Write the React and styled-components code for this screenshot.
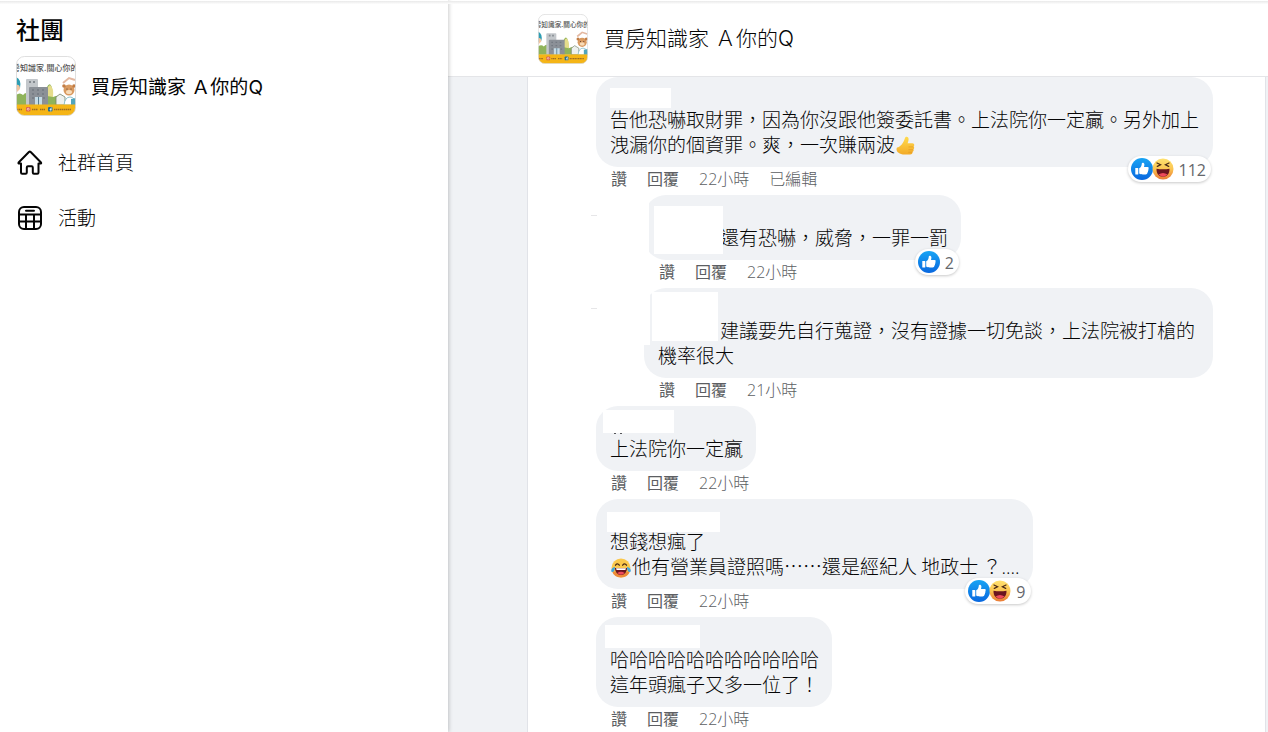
import React from "react";
import styled, { createGlobalStyle } from "styled-components";

const GlobalStyle = createGlobalStyle`
  * {
    box-sizing: border-box;
  }

  body {
    margin: 0;
    background: #ffffff;
    color: #050505;
    font-family: "Noto Sans CJK TC", "Open Sans", sans-serif;
    font-weight: 300;
  }

  h1, h2, p, ul {
    margin: 0;
    padding: 0;
  }

  a {
    color: inherit;
    text-decoration: none;
  }
`;

const Page = styled.div`
  display: flex;
  height: 100vh;
  overflow: hidden;
`;

const TopShade = styled.div`
  position: fixed;
  inset: 1px 0 auto 0;
  height: 3px;
  background: linear-gradient(#e9e9e9, #fdfdfd);
  z-index: 5;
`;

const Sidebar = styled.aside`
  flex: 0 0 448px;
  padding: 11px 16px;
  background: #ffffff;
  box-shadow: 1px 0 4px rgba(0, 0, 0, 0.2);
  z-index: 3;
`;

const SidebarTitle = styled.h1`
  font-size: 24px;
  line-height: 36px;
  font-weight: 500;
  margin-bottom: 9px;
`;

const GroupLink = styled.a`
  display: flex;
  align-items: center;
  gap: 15px;
  font-size: 19px;
  font-weight: 400;

  > span {
    padding-bottom: 2px;
  }
`;

const GroupPicture = styled.svg`
  display: block;
  flex: none;
  width: ${({ $size }) => $size}px;
  height: ${({ $size }) => $size}px;
`;

const Latin = styled.span`
  font-family: ${({ $wide }) => ($wide ? "Inter" : '"Open Sans"')}, sans-serif;
  line-height: 1;
`;

const Menu = styled.nav`
  display: flex;
  flex-direction: column;
  margin-top: 19px;
`;

const MenuItem = styled.a`
  display: flex;
  align-items: center;
  gap: 15px;
  height: 55px;
  font-size: 19px;

  svg {
    flex: none;
    width: 27px;
    height: 27px;
    fill: none;
    stroke: #050505;
    stroke-width: 2;
    stroke-linejoin: round;
    stroke-linecap: round;
  }

  span {
    padding-bottom: 2px;
  }
`;

const Main = styled.main`
  flex: 1;
  display: flex;
  flex-direction: column;
  min-width: 0;
  background: #f0f2f5;
`;

const Header = styled.header`
  display: flex;
  align-items: center;
  gap: 16px;
  flex: none;
  height: 77px;
  padding: 2px 0 0 90px;
  background: #ffffff;
  border-bottom: 1px solid #e4e5e8;
  z-index: 2;

  h2 {
    padding-bottom: 4px;
    font-size: 21px;
    font-weight: 300;
  }
`;

const Feed = styled.section`
  flex: 1;
  min-height: 0;
  margin: 0 2px 0 79px;
  padding: 0 52px 0 68px;
  border: solid #e1e3e8;
  border-width: 0 1px;
  background: #ffffff;
  overflow-y: auto;
  scrollbar-width: none;
`;

const Comment = styled.article`
  position: relative;
  padding-left: ${({ $reply }) => ($reply ? 48 : 0)}px;
  margin-bottom: 6px;
`;

const ThreadMark = styled.span`
  position: absolute;
  left: -5px;
  top: 20px;
  width: 6px;
  height: 1px;
  background: #e6e6e8;
`;

const Bubble = styled.div`
  position: relative;
  width: fit-content;
  max-width: 100%;
  padding: 29px 13px 11px 14px;
  border-radius: 22px;
  background: #f0f2f5;
`;

const Body = styled.p`
  font-size: 19px;
  line-height: 25px;
`;

const Mention = styled.span`
  display: inline-block;
  width: 62px;
`;

// Blank block laid over a commenter's name.
const Cover = styled.span`
  position: absolute;
  left: ${({ $x }) => $x}px;
  top: ${({ $y }) => $y}px;
  width: ${({ $w }) => $w}px;
  height: ${({ $h }) => $h}px;
  background: ${({ $color }) => $color || "#ffffff"};
`;

const Emoji = styled.svg`
  display: inline-block;
  width: 20px;
  height: 20px;
  margin: 0 1px;
  vertical-align: bottom;
`;

const Reactions = styled.button`
  position: absolute;
  right: 2px;
  bottom: -15px;
  display: flex;
  align-items: center;
  height: 26px;
  padding: 0 5px 0 3px;
  border: 0;
  border-radius: 13px;
  background: #ffffff;
  box-shadow: 0 1px 3px rgba(0, 0, 0, 0.22);
  color: #65676b;
  font: 400 16px/26px "Open Sans", sans-serif;
  z-index: 1;

  svg {
    width: 22px;
    height: 22px;
  }

  svg + svg {
    margin-left: -1px;
  }

  span {
    padding: 2px 0 0 5px;
  }
`;

const Actions = styled.div`
  display: flex;
  align-items: center;
  gap: 20px;
  height: 22px;
  padding-left: 15px;
  color: #5c5e62;
  font-size: 16px;
  line-height: 22px;
`;

const ActionButton = styled.button`
  padding: 0;
  border: 0;
  background: none;
  color: inherit;
  font: inherit;
  font-weight: 400;
  cursor: pointer;
`;

function Picture({ size, id }) {
  return (
    <GroupPicture $size={size} viewBox="0 0 60 60" aria-hidden="true">
      <defs>
        <clipPath id={id}>
          <rect x="0.5" y="0.5" width="59" height="59" rx="8" />
        </clipPath>
      </defs>
      <g clipPath={`url(#${id})`}>
        <rect width="60" height="60" fill="#ffffff" />
        <text x="-4" y="15" fontSize="8" fontWeight="500" fill="#555555">
          房知識家.關心你的
        </text>
        <path d="M0 49V39q4-3 7 0 3-4 7 0v10zM29 49l2-18q3-6 5 1l1 9q7-3 9 1l4 7z" fill="#8fb35a" />
        <path d="M31 40q-1-9 3-11 4 3 3 12z" fill="#e5dc8b" />
        <path d="M0 21q6 3 4 11l-4 2z" fill="#2d9db3" />
        <path d="M0 29q4-1 4 4l-4 4z" fill="#f2c49f" />
        <path d="M10 49V24q0-1 1-1h10q1 0 1 1v25z" fill="#c3c7cb" />
        <path d="M13 49V32q0-1 1-1h17q1 0 1 1v17z" fill="#8b9097" />
        <path d="M16 34h2m3 0h2m3 0h2M16 38h2m3 0h2m3 0h2M16 42h2m9 0h2" stroke="#747a82" strokeWidth="1.500" />
        <path d="M13 26h2m2 0h2" stroke="#858b91" strokeWidth="2" />
        <path d="M19 49v-8h7v8z" fill="#c5dce7" />
        <path d="M22.500 41v8" stroke="#597d91" strokeWidth="1" />
        <path d="M40 49v-8l4-3 5 3v8z" fill="#edf0ee" stroke="#75836b" strokeWidth="0.800" />
        <circle cx="53" cy="34" r="5.500" fill="#d99a60" />
        <circle cx="48" cy="30" r="1.800" fill="#c27d45" />
        <circle cx="58" cy="30" r="1.800" fill="#c27d45" />
        <ellipse cx="53" cy="36" rx="3" ry="2" fill="#f7dbb8" />
        <circle cx="51" cy="33" r="0.600" fill="#493126" />
        <circle cx="55" cy="33" r="0.600" fill="#493126" />
        <path d="M47 27l6-5 6 2" fill="none" stroke="#e3b8a1" strokeWidth="2" />
        <path d="M48 49q1-8 6-8t6 8z" fill="#ffffff" stroke="#8cc0cc" strokeWidth="1" />
        <path d="M55 43l5-1v7h-5z" fill="#50a5bd" />
        <rect y="48.500" width="60" height="11.500" fill="#f5b516" />
        <rect x="10" y="51" width="4.500" height="4.500" rx="1" fill="#dc624b" />
        <circle cx="12.200" cy="53.200" r="1" fill="none" stroke="#ffffff" strokeWidth="0.600" />
        <rect x="32" y="51" width="4.500" height="4.500" rx="1" fill="#236d94" />
        <path d="M34.800 55.500v-3.500h1M33.600 53.500h2" stroke="#ffffff" strokeWidth="0.700" fill="none" />
        <path d="M1 53.500h5M16 53.500h6m2 0h5M38 53.500h17" stroke="#9c6c22" strokeWidth="1.500" strokeDasharray="1.500 .5" />
      </g>
      <rect x="0.500" y="0.500" width="59" height="59" rx="8" fill="none" stroke="#d7d7d7" strokeWidth="0.800" />
    </GroupPicture>
  );
}

function HomeIcon() {
  return (
    <svg viewBox="0 0 27 27" aria-hidden="true">
      <path d="M5 14.500H2.800q-.7-.3-.2-1L12.900 3q.9-.8 1.800 0L25 13.500q.5.700-.2 1h-2.300v9q0 1.200-1.200 1.200H18q-1.200 0-1.200-1.200v-5q0-1.200-1.200-1.200h-3.600q-1.200 0-1.200 1.200v5q0 1.200-1.200 1.200H6.200Q5 24.700 5 23.500z" />
    </svg>
  );
}

function EventsIcon() {
  return (
    <svg viewBox="0 0 27 27" aria-hidden="true">
      <rect x="3" y="3" width="22" height="22" rx="5" />
      <path d="M3 10.500h22M3 17.500h22M10 10.500v14.500M18 10.500v14.500M10 6.800h8" />
    </svg>
  );
}

function LikeIcon() {
  return (
    <svg viewBox="0 0 22 22" aria-hidden="true">
      <defs>
        <linearGradient id="likeFill" x1="0" y1="0" x2="0" y2="1">
          <stop offset="0" stopColor="#18a4f4" />
          <stop offset="1" stopColor="#0867df" />
        </linearGradient>
      </defs>
      <circle cx="11" cy="11" r="11" fill="url(#likeFill)" />
      <path d="M4.300 10h2.400q.6 0 .6.600v5.300q0 .6-.6.600H4.900q-.6 0-.6-.6zM8.200 10.300c1.900-1.100 2.500-2.700 2.600-4.800 0-1.300 2.600-1.200 2.600 1.100 0 1-.2 1.700-.4 2.400h3.500c1.300 0 1.700 1.500.7 2.100.6.700.4 1.600-.3 2 .3.800 0 1.400-.6 1.700.1 1.200-.5 1.700-1.700 1.700h-2.700c-1.500 0-2.600-.2-3.700-.9z" fill="#ffffff" />
    </svg>
  );
}

function HahaIcon() {
  return (
    <svg viewBox="0 0 22 22" aria-hidden="true">
      <defs>
        <linearGradient id="hahaFill" x1="0" y1="0" x2="0" y2="1">
          <stop offset="0" stopColor="#ffe271" />
          <stop offset="0.500" stopColor="#fbc551" />
          <stop offset="1" stopColor="#ea7a35" />
        </linearGradient>
      </defs>
      <circle cx="11" cy="11" r="10.500" fill="url(#hahaFill)" />
      <path d="M5 5l3.600 1.800L5.300 8.400M17 5l-3.600 1.800 3.300 1.600" fill="none" stroke="#4a2b18" strokeWidth="1.200" strokeLinecap="round" />
      <path d="M4.500 10.800q6.500 1 13 0c.2 4.800-2.500 8-6.500 8s-6.700-3.200-6.500-8z" fill="#6b1520" />
      <path d="M6.500 16.600q4.500-3.300 9 0-4.500 4.200-9 0z" fill="#ef4a5c" />
    </svg>
  );
}

function ThumbEmoji() {
  return (
    <Emoji viewBox="0 0 20 20" role="img" aria-label="讚">
      <defs>
        <linearGradient id="thumbFill" x1="0" y1="0" x2="0" y2="1">
          <stop offset="0" stopColor="#ffdb4e" />
          <stop offset="1" stopColor="#f3ab28" />
        </linearGradient>
      </defs>
      <path d="M1 11.500c3.500-.8 6.500-4.500 8-9.600.6-2 3.600-1.500 3.600 1 0 1.600-.5 2.900-1 4.300h4.700c2.300 0 2.500 2.600 1.200 3.300 1.100.8.8 2.400-.2 2.900.7 1 .2 2.100-.8 2.500.2 1.700-1 2.600-2.400 2.600H8.800c-2.600 0-5-.8-7.300-2.600-1.200-1.400-1.300-3-.5-4.400z" fill="url(#thumbFill)" />
      <path d="M12.500 10.900h5M12.500 13.700h4.800M12.300 16.300h4" stroke="#e49a22" strokeWidth="0.700" />
    </Emoji>
  );
}

function JoyEmoji() {
  return (
    <Emoji viewBox="0 0 20 20" role="img" aria-label="笑到流淚">
      <circle cx="10" cy="10" r="9.500" fill="#fbc84c" />
      <path d="M.9 12.500q9.100 5 18.200 0-2 7-9.100 7t-9.100-7z" fill="#ee8b39" />
      <path d="M4.500 7.200q2-2.500 3.800 0M11.700 7.200q2-2.500 3.800 0" fill="none" stroke="#4a2b18" strokeWidth="1.300" strokeLinecap="round" />
      <path d="M4 10h12c0 4-2.500 7-6 7s-6-3-6-7z" fill="#6b1520" />
      <path d="M5 10.200h10l-.6 1.800H5.600z" fill="#ffffff" />
      <path d="M6.300 15q3.700-2.500 7.400 0-3.700 3.500-7.400 0z" fill="#ef4a5c" />
      <path d="M4 9c-3 .5-4.500 3-3.500 4.800 1.700 1.200 3.700-1.300 3.500-4.800zM16 9c3 .5 4.500 3 3.500 4.800-1.700 1.200-3.700-1.300-3.500-4.800z" fill="#42a5dc" />
    </Emoji>
  );
}

const comments = [
  {
    id: 1,
    text: (
      <>
        告他恐嚇取財罪，因為你沒跟他簽委託書。上法院你一定贏。另外加上洩漏你的個資罪。爽，一次賺兩波
        <ThumbEmoji />
      </>
    ),
    covers: [[14, 11, 61, 20]],
    hours: 22,
    edited: true,
    likes: 112,
    haha: true,
  },
  {
    id: 2,
    reply: true,
    text: "還有恐嚇，威脅，一罪一罰",
    covers: [[0, 0, 5, 65], [10, 11, 69, 48]],
    hours: 22,
    likes: 2,
  },
  {
    id: 3,
    reply: true,
    text: "建議要先自行蒐證，沒有證據一切免談，上法院被打槍的機率很大",
    covers: [[0, 0, 6, 57], [8, 4, 66, 49]],
    hours: 21,
  },
  {
    id: 4,
    text: "上法院你一定贏",
    covers: [[7, 4, 71, 23], [18, 27, 2, 1, "#55565a"], [24, 27, 2, 1, "#55565a"]],
    hours: 22,
  },
  {
    id: 5,
    text: (
      <>
        想錢想瘋了
        <br />
        <JoyEmoji />
        他有營業員證照嗎……還是經紀人 地政士 ？<Latin>....</Latin>
      </>
    ),
    covers: [[11, 13, 113, 20]],
    hours: 22,
    likes: 9,
    haha: true,
  },
  {
    id: 6,
    text: (
      <>
        哈哈哈哈哈哈哈哈哈哈哈
        <br />
        這年頭瘋子又多一位了！
      </>
    ),
    covers: [[9, 8, 95, 23]],
    hours: 22,
  },
];

function CommentItem({ comment }) {
  const { reply, text, covers, hours, edited, likes, haha } = comment;

  return (
    <Comment $reply={reply}>
      {reply && <ThreadMark />}
      <Bubble>
        <Body>
          {reply && <Mention />}
          {text}
        </Body>
        {covers.map(([x, y, w, h, color]) => (
          <Cover key={`${x}-${y}`} $x={x} $y={y} $w={w} $h={h} $color={color} />
        ))}
        {likes && (
          <Reactions type="button">
            <LikeIcon />
            {haha && <HahaIcon />}
            <span>{likes}</span>
          </Reactions>
        )}
      </Bubble>
      <Actions>
        <ActionButton type="button">讚</ActionButton>
        <ActionButton type="button">回覆</ActionButton>
        <a href="#time">
          <Latin>{hours}</Latin>小時
        </a>
        {edited && <span>已編輯</span>}
      </Actions>
    </Comment>
  );
}

function GroupName() {
  return (
    <span>
      買房知識家<Latin $wide> </Latin>Ａ你的<Latin $wide>Q</Latin>
    </span>
  );
}

export default function App() {
  return (
    <>
      <GlobalStyle />
      <TopShade />
      <Page>
        <Sidebar>
          <SidebarTitle>社團</SidebarTitle>
          <GroupLink href="#group">
            <Picture size={60} id="sidebarPicture" />
            <GroupName />
          </GroupLink>
          <Menu>
            <MenuItem href="#home">
              <HomeIcon />
              <span>社群首頁</span>
            </MenuItem>
            <MenuItem href="#events">
              <EventsIcon />
              <span>活動</span>
            </MenuItem>
          </Menu>
        </Sidebar>
        <Main>
          <Header>
            <Picture size={50} id="headerPicture" />
            <h2>
              <GroupName />
            </h2>
          </Header>
          <Feed>
            {comments.map((comment) => (
              <CommentItem key={comment.id} comment={comment} />
            ))}
          </Feed>
        </Main>
      </Page>
    </>
  );
}
